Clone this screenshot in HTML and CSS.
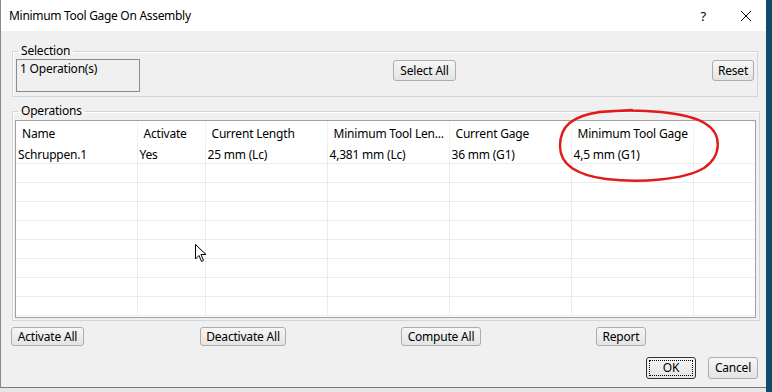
FILE: index.html
```html
<!DOCTYPE html>
<html>
<head>
<meta charset="utf-8">
<link rel="stylesheet" href="styles.css">
</head>
<body>
<div class="screen">
  <div class="main-row">
    <div class="window">
      <div class="titlebar">
        <span class="title">Minimum Tool Gage On Assembly</span>
        <span class="title-btns">
          <span class="help">?</span>
          <svg class="close" width="12" height="12" viewBox="0 0 12 12"><path d="M1 1 L11 11 M11 1 L1 11" stroke="#000" stroke-width="1"/></svg>
        </span>
      </div>
      <div class="client">
        <fieldset class="group sel-group">
          <legend>Selection</legend>
          <div class="sel-row">
            <div class="sel-box">1 Operation(s)</div>
            <button class="btn btn-select">Select All</button>
            <button class="btn btn-reset">Reset</button>
          </div>
        </fieldset>
        <fieldset class="group ops-group">
          <legend>Operations</legend>
          <div class="grid-box">
            <table class="grid">
              <colgroup>
                <col class="c1"><col class="c2"><col class="c3"><col class="c4"><col class="c5"><col class="c6"><col class="c7">
              </colgroup>
              <thead>
                <tr><th>Name</th><th>Activate</th><th>Current Length</th><th>Minimum Tool Len...</th><th>Current Gage</th><th>Minimum Tool Gage</th><th></th></tr>
              </thead>
              <tbody>
                <tr><td>Schruppen.1</td><td>Yes</td><td>25 mm (Lc)</td><td>4,381 mm (Lc)</td><td>36 mm (G1)</td><td>4,5 mm (G1)</td><td></td></tr>
                <tr><td></td><td></td><td></td><td></td><td></td><td></td><td></td></tr>
                <tr><td></td><td></td><td></td><td></td><td></td><td></td><td></td></tr>
                <tr><td></td><td></td><td></td><td></td><td></td><td></td><td></td></tr>
                <tr><td></td><td></td><td></td><td></td><td></td><td></td><td></td></tr>
                <tr><td></td><td></td><td></td><td></td><td></td><td></td><td></td></tr>
                <tr><td></td><td></td><td></td><td></td><td></td><td></td><td></td></tr>
                <tr><td></td><td></td><td></td><td></td><td></td><td></td><td></td></tr>
                <tr><td></td><td></td><td></td><td></td><td></td><td></td><td></td></tr>
              </tbody>
            </table>
          </div>
        </fieldset>
        <div class="action-row">
          <button class="btn btn-act">Activate All</button>
          <button class="btn btn-deact">Deactivate All</button>
          <button class="btn btn-comp">Compute All</button>
          <button class="btn btn-rep">Report</button>
        </div>
        <div class="dialog-row">
          <button class="btn btn-dlg btn-ok">OK</button>
          <button class="btn btn-dlg">Cancel</button>
        </div>
      </div>
      <svg class="annotation" width="772" height="392" viewBox="0 0 772 392">
        <path d="M598 112 C640 108 688 112 706 124 C722 134 722 156 704 168 C684 180 640 183 606 179 C576 175 560 164 560 146 C560 126 572 116 600 112 L632 110" fill="none" stroke="#e11b1b" stroke-width="2.4" stroke-linecap="round"/>
        <path d="M195.5 244.5 L195.5 259 L199 255.5 L201.5 261.5 L203.5 260.5 L201 254.5 L206 254.5 Z" fill="#fff" stroke="#000" stroke-width="1" stroke-linejoin="miter"/>
      </svg>
    </div>
    <div class="side"></div>
  </div>
  <div class="below"><span class="below-a">28000turn_mn Angular</span><span class="below-b">Aluminium&nbsp;&nbsp;Profile c 2,085s</span></div>
</div>
</body>
</html>
```
FILE: styles.css
```css
html, body {
  margin: 0;
  padding: 0;
}
body {
  width: 772px;
  height: 392px;
  overflow: hidden;
  background: #124a6c;
  font-family: "Noto Sans", "Segoe UI", sans-serif;
  font-size: 12px;
  letter-spacing: -0.2px;
  color: #000;
}
.screen {
  width: 772px;
  height: 392px;
  display: flex;
  flex-direction: column;
}
.main-row {
  display: flex;
  height: 388px;
}
.window {
  position: relative;
  width: 765px;
  height: 387px;
  border-left: 1px solid #8a8a8a;
  border-bottom: 1px solid #7a7a7a;
  background: #f0f0f0;
  display: flex;
  flex-direction: column;
}
.side {
  flex: 1;
  background: #124a6c;
}
.below {
  height: 4px;
  background: #e6e6e6;
  overflow: hidden;
  width: 766px;
  font-size: 13px;
  color: #333;
  white-space: nowrap;
}
.below span {
  display: inline-block;
  line-height: 13px;
  margin-top: -2px;
}
.below-a { margin-left: 52px; }
.below-b { margin-left: 50px; }

.titlebar {
  height: 31px;
  background: #fff;
  display: flex;
  align-items: center;
  justify-content: space-between;
  padding-left: 8px;
  padding-right: 14px;
}
.title {
  font-size: 12px;
  letter-spacing: -0.3px;
}
.title-btns {
  display: flex;
  align-items: center;
  gap: 34px;
}
.help { font-size: 13px; }
.client {
  flex: 1;
  display: flex;
  flex-direction: column;
  padding: 12px 8px 0 11px;
}
.group {
  margin: 0;
  padding: 0 3px 2px 2px;
  border: 1px solid #d5d5d5;
  box-shadow: inset 1px 1px 0 #fff;
  width: 746px;
  box-sizing: border-box;
}
.group legend {
  padding: 0 3px;
  margin-left: 3px;
  line-height: 16px;
  color: #000;
}
.sel-group {
  height: 54px;
}
.sel-row {
  display: flex;
  align-items: flex-start;
}
.sel-box {
  width: 116px;
  height: 27px;
  border: 1px solid #8c8c8c;
  margin-left: 1px;
  padding: 2px 3px;
  line-height: 14px;
}
.btn {
  font-family: "Noto Sans", "Segoe UI", sans-serif;
  font-size: 12px;
  letter-spacing: -0.2px;
  height: 19px;
  padding: 0;
  border: 1px solid #adadad;
  border-radius: 3px;
  background: linear-gradient(#f6f6f6, #e4e4e4);
  color: #000;
  line-height: 16px;
  box-sizing: border-box;
  white-space: nowrap;
}
.btn-select { margin-left: 253px; margin-top: 1px; height: 21px; width: 63px; }
.btn-reset { margin-left: auto; margin-top: 1px; height: 21px; width: 42px; }
.ops-group {
  margin-top: 6px;
  height: 218px;
}
.grid-box {
  width: 741px;
  height: 198px;
  margin-top: 1px;
  border: 1px solid #a0a0a0;
  background: #fff;
  overflow: hidden;
  box-sizing: border-box;
}
.grid {
  border-collapse: collapse;
  table-layout: fixed;
  width: 739px;
}
.c1 { width: 121px; }
.c2 { width: 68px; }
.c3, .c4, .c5, .c6 { width: 122px; }
.c7 { width: 62px; }
.grid th {
  height: 24px;
  padding: 1px 0 0 6px;
  text-align: left;
  font-weight: normal;
  border-right: 1px solid #f2f2f2;
  white-space: nowrap;
  overflow: hidden;
  box-sizing: border-box;
}
.grid td {
  height: 18px;
  padding: 0 0 0 2px;
  border-right: 1px solid #ececec;
  border-bottom: 1px solid #ececec;
  white-space: nowrap;
  overflow: hidden;
}
.action-row {
  display: flex;
  margin-top: 6px;
  margin-left: -1px;
}
.action-row .btn { height: 19px; }
.btn-act { width: 73px; }
.btn-deact { width: 86px; margin-left: 116px; }
.btn-comp { width: 80px; margin-left: 115px; }
.btn-rep { width: 50px; margin-left: 115px; }
.dialog-row {
  display: flex;
  justify-content: flex-end;
  gap: 12px;
  margin-top: 11px;
  padding-right: 0;
}
.btn-dlg {
  width: 50px;
  height: 22px;
}
.btn-ok {
  border-color: #333;
  outline: 1px dotted #000;
  outline-offset: -4px;
}
.annotation {
  position: absolute;
  left: -1px;
  top: 0;
  pointer-events: none;
}
```
